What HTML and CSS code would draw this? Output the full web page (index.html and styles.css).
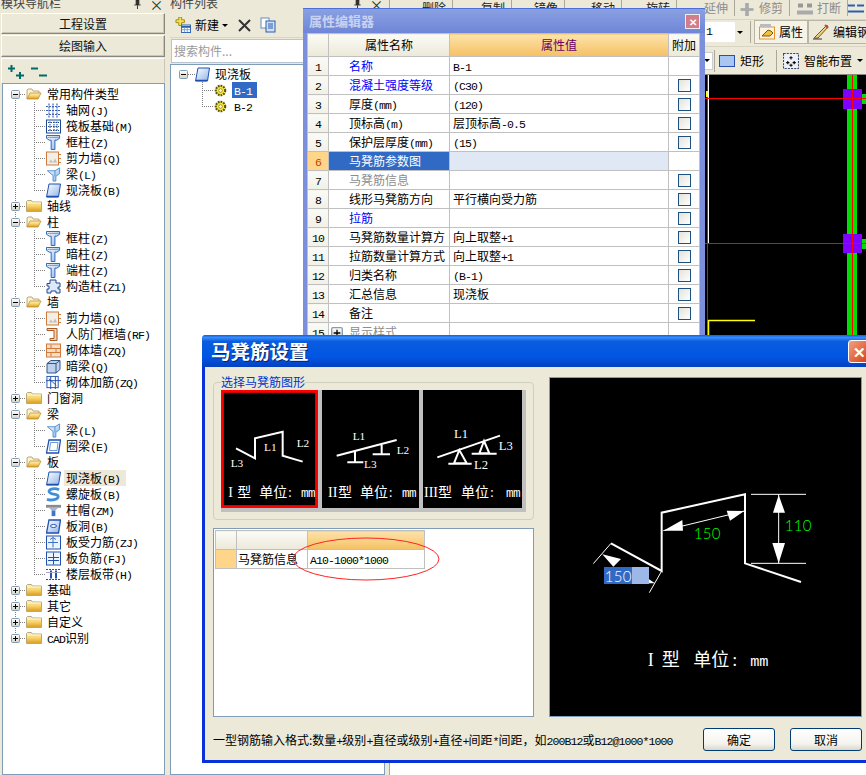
FILE: index.html
```html
<!DOCTYPE html>
<html lang="zh-CN">
<head>
<meta charset="utf-8">
<title>马凳筋设置</title>
<link rel="stylesheet" href="styles.css">
</head>
<body>
<svg class="defs" xmlns="http://www.w3.org/2000/svg">
  <defs>
    <linearGradient id="gy" x1="0" y1="0" x2="0" y2="1"><stop offset="0" stop-color="#fff3b8"/><stop offset=".5" stop-color="#f7d36a"/><stop offset="1" stop-color="#d99a1e"/></linearGradient>
    <linearGradient id="gb" x1="0" y1="0" x2="1" y2="1"><stop offset="0" stop-color="#ffffff"/><stop offset="1" stop-color="#8fb4ea"/></linearGradient>
    <linearGradient id="gw" x1="0" y1="0" x2="0" y2="1"><stop offset="0" stop-color="#ffffff"/><stop offset="1" stop-color="#d6d2c0"/></linearGradient>
    <symbol id="minus" viewBox="0 0 9 9"><rect x=".5" y=".5" width="8" height="8" rx="1" fill="url(#gw)" stroke="#7f9db9"/><path d="M2 4.500h5" stroke="#000"/></symbol>
    <symbol id="plus" viewBox="0 0 9 9"><rect x=".5" y=".5" width="8" height="8" rx="1" fill="url(#gw)" stroke="#7f9db9"/><path d="M2 4.500h5M4.500 2v5" stroke="#000"/></symbol>
    <symbol id="pinx" viewBox="0 0 9 10"><path d="M3 0h3v5H3zM1 5.500h7M4.500 6v4" fill="#333" stroke="#222"/></symbol>
    <symbol id="fo" viewBox="0 0 16 12"><path d="M1 11V2l1-1h4l1 2h6v2" fill="#fdf3cf" stroke="#b9a878"/><path d="M1 11l3-6h11l-3 6z" fill="url(#gy)" stroke="#b98f3a" stroke-width=".8"/></symbol>
    <symbol id="fc" viewBox="0 0 16 12"><path d="M.5 11.500V1.500l1-1h4l1 1.500h9v9.500z" fill="url(#gy)" stroke="#b9a878"/><path d="M1 3h14" stroke="#fff8d8"/></symbol>
    <symbol id="grid" viewBox="0 0 15 14"><path d="M0 3h15M0 7h15M0 11h15M3 0v14M7 0v14M11 0v14" stroke="#3a62b8" stroke-width="1.200" stroke-dasharray="2 1"/></symbol>
    <symbol id="raft" viewBox="0 0 15 14"><rect x=".5" y=".5" width="14" height="13" fill="#fff" stroke="#1f4a8f"/><path d="M2 3h11M2 7h11M2 11h11M4 2v10M8 2v10M11 2v10" stroke="#1f4a8f" stroke-dasharray="1.500 1"/></symbol>
    <symbol id="col" viewBox="0 0 15 16"><path d="M0 .5h14v3l-3 2H9v10H5V5.500H3l-3-2z" fill="url(#gb)" stroke="#1f5fb8"/><path d="M1 2.500h12" stroke="#7a8ca8"/></symbol>
    <symbol id="shear" viewBox="0 0 15 14"><rect x=".5" y=".5" width="12" height="13" fill="#f4efe6" stroke="#d07a3c"/><path d="M3 11l2-3 2 3 2-4 2 4z" fill="#aaa" opacity=".7"/><path d="M13 3h2M13 7h2M13 11h2" stroke="#d07a3c"/></symbol>
    <symbol id="beam" viewBox="0 0 15 16"><path d="M1 4h8l5-3v6l-4 3v5H7V9z" fill="url(#gb)" stroke="#4a90d0"/><path d="M9 4v6" stroke="#4a90d0"/></symbol>
    <symbol id="slab" viewBox="0 0 15 14"><path d="M3 .5h11.500l-2 13H.5z" fill="url(#gb)" stroke="#1f4fb0"/><path d="M1 13h11" stroke="#1f4fb0" stroke-width="1.500"/></symbol>
    <symbol id="gear" viewBox="0 0 11 11"><circle cx="5.500" cy="5.500" r="4" fill="#f5e642" stroke="#5a5200" stroke-dasharray="1.500 .8" stroke-width="1.800"/><circle cx="5.500" cy="5.500" r="1.500" fill="#fff" stroke="#8a7a00" stroke-width=".6"/></symbol>
    <symbol id="gzz" viewBox="0 0 15 14"><path d="M4 .5h6v3h4v4h-2v2h2v4H10v-2H5v2H1v-4h2v-3H1V4h3z" fill="#dfe8f6" stroke="#1f4a8f"/></symbol>
    <symbol id="rf" viewBox="0 0 15 14"><path d="M1 1h10v12H4v-2h4V3H1z" fill="#f6d7b4" stroke="#a85a20"/></symbol>
    <symbol id="brick" viewBox="0 0 15 14"><rect x=".5" y=".5" width="14" height="13" fill="#f8dcc4" stroke="#d07a3c"/><path d="M0 5h15M0 9h15M5 1v4M10 5v4M5 9v4" stroke="#d07a3c"/></symbol>
    <symbol id="dark" viewBox="0 0 15 14"><path d="M1 4l4-3h9v9l-4 3.500H1z" fill="#bcd2ee" stroke="#36557f"/><path d="M1 4h9v9.500M10 4l4-3" fill="none" stroke="#36557f"/></symbol>
    <symbol id="jj" viewBox="0 0 16 14"><rect x="1" y=".5" width="12" height="12" fill="#fff" stroke="#2050b0"/><path d="M0 5h16M5 1v13M10 1v13M3 3l8 7" stroke="#2050b0"/></symbol>
    <symbol id="ring" viewBox="0 0 15 14"><path d="M3 .5h11.500l-2 13H.5z" fill="#fff" stroke="#1f4fb0" stroke-width="1.300"/><path d="M4.500 3h7.500l-1 8H3.500z" fill="none" stroke="#6a9ad8"/></symbol>
    <symbol id="spiral" viewBox="0 0 16 14"><path d="M14 2C8-1 1 2 4 5s9 1 9 4-7 5-12 3" fill="none" stroke="#3f8fd8" stroke-width="3"/></symbol>
    <symbol id="cap" viewBox="0 0 16 14"><rect y="1" width="16" height="3" fill="#8a8a8a"/><path d="M3 4h10l-3 3H6z" fill="#a8b8cc"/><rect x="6" y="7" width="4" height="6" fill="#3f72c8"/></symbol>
    <symbol id="hole" viewBox="0 0 15 14"><path d="M3 .5h11.500l-2 13H.5z" fill="url(#gb)" stroke="#1f4fb0" stroke-width="1.300"/><ellipse cx="7.500" cy="6.500" rx="3" ry="1.500" fill="#fff" stroke="#1f4fb0"/></symbol>
    <symbol id="sl" viewBox="0 0 15 14"><rect x=".5" y=".5" width="14" height="13" fill="#eef4fc" stroke="#2050b0"/><path d="M7 2v10M2 7h10M4 4l3-2 3 2" fill="none" stroke="#3a72c8"/></symbol>
    <symbol id="neg" viewBox="0 0 15 14"><rect x=".5" y=".5" width="14" height="13" fill="#eef4fc" stroke="#2050b0"/><path d="M2 6h11M2 9h11M7.500 1v12" stroke="#2050b0"/></symbol>
    <symbol id="band" viewBox="0 0 15 14"><path d="M0 2h15M0 12h15" stroke="#2050b0" stroke-dasharray="2 1"/><path d="M5 3v8M10 3v8" stroke="#2050b0" stroke-width="2"/><path d="M0 5h15" stroke="#aac"/></symbol>
  </defs>
</svg>

<aside class="nav">
  <div class="ptitle"><span class="ptext">模块导航栏</span><svg class="pin"><use href="#pinx"/></svg><span class="pclose">×</span></div>
  <button class="navbtn">工程设置</button>
  <button class="navbtn">绘图输入</button>
  <div class="navtools">
    <svg class="tool" viewBox="0 0 16 14"><path d="M0 3.500h7M3.500 0v7M8 10.500h8M12 7v7" stroke="#006a6a" stroke-width="2"/></svg>
    <svg class="tool" viewBox="0 0 16 14"><path d="M0 3.500h7M8 10.500h8" stroke="#006a6a" stroke-width="2"/></svg>
  </div>
  <div class="tree navtree">
    <div class="nodes">
      <div class="row"><svg class="exp"><use href="#minus"/></svg><i class="dash d6"></i><svg class="folder"><use href="#fo"/></svg><span>常用构件类型</span></div>
      <div class="kids">
        <div class="leaf"><i class="dash d12"></i><svg class="ico"><use href="#grid"/></svg><span>轴网<i class="l">(J)</i></span></div>
        <div class="leaf"><i class="dash d12"></i><svg class="ico"><use href="#raft"/></svg><span>筏板基础<i class="l">(M)</i></span></div>
        <div class="leaf"><i class="dash d12"></i><svg class="ico"><use href="#col"/></svg><span>框柱<i class="l">(Z)</i></span></div>
        <div class="leaf"><i class="dash d12"></i><svg class="ico"><use href="#shear"/></svg><span>剪力墙<i class="l">(Q)</i></span></div>
        <div class="leaf"><i class="dash d12"></i><svg class="ico"><use href="#beam"/></svg><span>梁<i class="l">(L)</i></span></div>
        <div class="leaf"><i class="dash d12"></i><svg class="ico"><use href="#slab"/></svg><span>现浇板<i class="l">(B)</i></span></div>
      </div>
      <div class="row"><svg class="exp"><use href="#plus"/></svg><i class="dash d6"></i><svg class="folder"><use href="#fc"/></svg><span>轴线</span></div>
      <div class="row"><svg class="exp"><use href="#minus"/></svg><i class="dash d6"></i><svg class="folder"><use href="#fo"/></svg><span>柱</span></div>
      <div class="kids">
        <div class="leaf"><i class="dash d12"></i><svg class="ico"><use href="#col"/></svg><span>框柱<i class="l">(Z)</i></span></div>
        <div class="leaf"><i class="dash d12"></i><svg class="ico"><use href="#col"/></svg><span>暗柱<i class="l">(Z)</i></span></div>
        <div class="leaf"><i class="dash d12"></i><svg class="ico"><use href="#col"/></svg><span>端柱<i class="l">(Z)</i></span></div>
        <div class="leaf"><i class="dash d12"></i><svg class="ico"><use href="#gzz"/></svg><span>构造柱<i class="l">(Z1)</i></span></div>
      </div>
      <div class="row"><svg class="exp"><use href="#minus"/></svg><i class="dash d6"></i><svg class="folder"><use href="#fo"/></svg><span>墙</span></div>
      <div class="kids">
        <div class="leaf"><i class="dash d12"></i><svg class="ico"><use href="#shear"/></svg><span>剪力墙<i class="l">(Q)</i></span></div>
        <div class="leaf"><i class="dash d12"></i><svg class="ico"><use href="#rf"/></svg><span>人防门框墙<i class="l">(RF)</i></span></div>
        <div class="leaf"><i class="dash d12"></i><svg class="ico"><use href="#brick"/></svg><span>砌体墙<i class="l">(ZQ)</i></span></div>
        <div class="leaf"><i class="dash d12"></i><svg class="ico"><use href="#dark"/></svg><span>暗梁<i class="l">(Q)</i></span></div>
        <div class="leaf"><i class="dash d12"></i><svg class="ico"><use href="#jj"/></svg><span>砌体加筋<i class="l">(ZQ)</i></span></div>
      </div>
      <div class="row"><svg class="exp"><use href="#plus"/></svg><i class="dash d6"></i><svg class="folder"><use href="#fc"/></svg><span>门窗洞</span></div>
      <div class="row"><svg class="exp"><use href="#minus"/></svg><i class="dash d6"></i><svg class="folder"><use href="#fo"/></svg><span>梁</span></div>
      <div class="kids">
        <div class="leaf"><i class="dash d12"></i><svg class="ico"><use href="#beam"/></svg><span>梁<i class="l">(L)</i></span></div>
        <div class="leaf"><i class="dash d12"></i><svg class="ico"><use href="#ring"/></svg><span>圈梁<i class="l">(E)</i></span></div>
      </div>
      <div class="row"><svg class="exp"><use href="#minus"/></svg><i class="dash d6"></i><svg class="folder"><use href="#fo"/></svg><span>板</span></div>
      <div class="kids">
        <div class="leaf"><i class="dash d12"></i><svg class="ico"><use href="#slab"/></svg><span class="hl">现浇板<i class="l">(B)</i></span></div>
        <div class="leaf"><i class="dash d12"></i><svg class="ico"><use href="#spiral"/></svg><span>螺旋板<i class="l">(B)</i></span></div>
        <div class="leaf"><i class="dash d12"></i><svg class="ico"><use href="#cap"/></svg><span>柱帽<i class="l">(ZM)</i></span></div>
        <div class="leaf"><i class="dash d12"></i><svg class="ico"><use href="#hole"/></svg><span>板洞<i class="l">(B)</i></span></div>
        <div class="leaf"><i class="dash d12"></i><svg class="ico"><use href="#sl"/></svg><span>板受力筋<i class="l">(ZJ)</i></span></div>
        <div class="leaf"><i class="dash d12"></i><svg class="ico"><use href="#neg"/></svg><span>板负筋<i class="l">(FJ)</i></span></div>
        <div class="leaf"><i class="dash d12"></i><svg class="ico"><use href="#band"/></svg><span>楼层板带<i class="l">(H)</i></span></div>
      </div>
      <div class="row"><svg class="exp"><use href="#plus"/></svg><i class="dash d6"></i><svg class="folder"><use href="#fc"/></svg><span>基础</span></div>
      <div class="row"><svg class="exp"><use href="#plus"/></svg><i class="dash d6"></i><svg class="folder"><use href="#fc"/></svg><span>其它</span></div>
      <div class="row"><svg class="exp"><use href="#plus"/></svg><i class="dash d6"></i><svg class="folder"><use href="#fc"/></svg><span>自定义</span></div>
      <div class="row"><svg class="exp"><use href="#plus"/></svg><i class="dash d6"></i><svg class="folder"><use href="#fc"/></svg><span><i class="l">CAD</i>识别</span></div>
    </div>
  </div>
</aside>

<aside class="list">
  <div class="ptitle"><span class="ptext">构件列表</span><svg class="pin"><use href="#pinx"/></svg><span class="pclose">×</span></div>
  <div class="listtools">
    <svg class="ti16" viewBox="0 0 17 17"><path d="M4 0h3v3h3v3H7v3H4V6H1V3h3z" fill="#f5e05a" stroke="#a08a10"/><rect x="7" y="8.500" width="9.500" height="8" fill="#fff" stroke="#2a5fb0"/><path d="M7 10.500h9.500" stroke="#2a5fb0" stroke-width="2"/><path d="M10 11v5M13 11v5M7 13.500h9" stroke="#7fa0d0"/></svg>
    <span>新建</span><i class="caret"></i>
    <svg class="tix" viewBox="0 0 13 13"><path d="M1 1l11 11M12 1L1 12" stroke="#333" stroke-width="2"/></svg>
    <svg class="ti16" viewBox="0 0 16 16"><rect x="1" y="1" width="8" height="10" fill="#fff" stroke="#6a8ac0"/><rect x="6" y="4" width="9" height="11" fill="#cfe0f6" stroke="#2a5fb0"/><path d="M8 7h5M8 9h5M8 11h5" stroke="#2a5fb0"/></svg>
  </div>
  <div class="search">搜索构件...</div>
  <div class="tree listtree">
    <div class="nodes">
      <div class="row"><svg class="exp"><use href="#minus"/></svg><i class="dash d7"></i><svg class="ico"><use href="#slab"/></svg><span>现浇板</span></div>
      <div class="kids">
        <div class="leaf"><i class="dash d12"></i><svg class="gear"><use href="#gear"/></svg><span class="sel"><i class="l">B-1</i></span></div>
        <div class="leaf"><i class="dash d12"></i><svg class="gear"><use href="#gear"/></svg><span class="unsel"><i class="l">B-2</i></span></div>
      </div>
    </div>
  </div>
</aside>

<main class="main">
  <div class="tbar1">
    <div class="ti w63"><span>删除</span></div>
    <div class="ti w59"><span>复制</span></div>
    <div class="ti w53"><span>镜像</span></div>
    <div class="ti w57"><span>移动</span></div>
    <div class="ti w55"><span>旋转</span></div>
    <div class="ti w58 dim"><span>延伸</span></div>
    <div class="ti w55 dim"><svg class="tiw" viewBox="0 0 14 14"><path d="M0 7h14" stroke="#aaa" stroke-width="3"/><path d="M7 0v14" stroke="#aaa" stroke-width="4"/></svg><span>修剪</span></div>
    <div class="ti w58 dim"><svg class="tiw" viewBox="0 0 16 12"><rect x="1" y="0" width="5" height="4" fill="#999"/><rect x="10" y="0" width="5" height="4" fill="#999"/><rect y="7" width="16" height="4" fill="#aaa"/></svg><span>打断</span></div>
    <svg class="tiw" viewBox="0 0 16 12"><path d="M0 3h7M16 3H9M0 9h16" stroke="#2a5fb0" stroke-width="2"/></svg>
  </div>
  <div class="tbar2">
    <div class="combo"><span class="l">1</span><span class="cbtn"><i class="caret"></i></span></div>
    <i class="sep"></i>
    <div class="tbtn first">
      <svg class="ti16" viewBox="0 0 16 16"><rect x=".5" y="3" width="15" height="12" fill="#fff3dc" stroke="#e8932c"/><rect x="1" y="0" width="11" height="3" fill="#bbb"/><path d="M3 12l6-6 3 1 2 2-3 3z" fill="#f0c040" stroke="#7a5a10"/></svg>
      <span>属性</span>
    </div>
    <div class="tbtn">
      <svg class="ti16" viewBox="0 0 16 16"><path d="M1 14L11 4l3-3 1 2-10 11z" fill="#f0d080" stroke="#7a5a10"/><path d="M0 15h9" stroke="#333"/><path d="M12 1l3 3" stroke="#d04040" stroke-width="2"/></svg>
      <span>编辑钢筋</span>
    </div>
  </div>
  <div class="tbar3">
    <div class="minibox"><i class="caret"></i></div>
    <i class="sep sep3"></i>
    <svg class="ti16" viewBox="0 0 16 12"><rect x=".5" y=".5" width="15" height="11" fill="#a9c6f0" stroke="#2a4fb0"/></svg>
    <span class="tt">矩形</span>
    <i class="sep sep4"></i>
    <svg class="ti16" viewBox="0 0 15 15"><rect x=".5" y=".5" width="14" height="14" fill="#eef2f8" stroke="#3a4a6a" stroke-dasharray="2 1"/><path d="M7.500 3v3M6 4.500h3M3 9h3M4.500 7.500v3M9 9h3M10.500 7.500v3M7.500 10v3M6 11.500h3" stroke="#000"/></svg>
    <span class="tt">智能布置</span><i class="caret"></i>
  </div>
  <div class="cad">
    <svg class="cadsvg" viewBox="705 75 161 280">
      <path d="M708.500 75V243" stroke="#fff"/>
      <path d="M707.500 75V355" stroke="#f00"/>
      <path d="M706 91h2v6h-2z" fill="#ff0"/>
      <path d="M708 320.500h47M708.500 320V355" stroke="#ff0" stroke-width="1.500"/>
      <rect x="847" y="75" width="10" height="280" fill="#0d0"/>
      <rect x="862" y="94" width="4" height="10" fill="#0d0"/>
      <rect x="862" y="239" width="4" height="10" fill="#0d0"/>
      <path d="M862 98.500h4M862 243.500h4" stroke="#000"/>
      <rect x="843" y="89" width="19" height="20" fill="#7f00ff"/>
      <rect x="843" y="234" width="19" height="19" fill="#7f00ff"/>
      <path d="M705 98.500H866M705 243.500H866M852.500 75V355" stroke="#f00"/>
    </svg>
  </div>
</main>

<section class="prop">
  <header class="proptitle"><span>属性编辑器</span><b class="propx">✕</b></header>
  <table class="ptable">
    <colgroup><col class="c1"><col class="c2"><col class="c3"><col class="c4"></colgroup>
    <thead><tr><th></th><th>属性名称</th><th class="valh">属性值</th><th>附加</th></tr></thead>
    <tbody>
      <tr><td class="n"><i class="l">1</i></td><td class="nm blue">名称</td><td class="v"><i class="l">B-1</i></td><td></td></tr>
      <tr><td class="n"><i class="l">2</i></td><td class="nm blue">混凝土强度等级</td><td class="v"><i class="l">(C30)</i></td><td class="k"><i class="cb"></i></td></tr>
      <tr><td class="n"><i class="l">3</i></td><td class="nm">厚度<i class="l">(mm)</i></td><td class="v"><i class="l">(120)</i></td><td class="k"><i class="cb"></i></td></tr>
      <tr><td class="n"><i class="l">4</i></td><td class="nm">顶标高<i class="l">(m)</i></td><td class="v">层顶标高<i class="l">-0.5</i></td><td class="k"><i class="cb"></i></td></tr>
      <tr><td class="n"><i class="l">5</i></td><td class="nm">保护层厚度<i class="l">(mm)</i></td><td class="v"><i class="l">(15)</i></td><td class="k"><i class="cb"></i></td></tr>
      <tr class="cur"><td class="n"><i class="l">6</i></td><td class="nm">马凳筋参数图</td><td class="v"></td><td></td></tr>
      <tr><td class="n"><i class="l">7</i></td><td class="nm gray">马凳筋信息</td><td class="v"></td><td class="k"><i class="cb"></i></td></tr>
      <tr><td class="n"><i class="l">8</i></td><td class="nm">线形马凳筋方向</td><td class="v">平行横向受力筋</td><td class="k"><i class="cb"></i></td></tr>
      <tr><td class="n"><i class="l">9</i></td><td class="nm blue">拉筋</td><td class="v"></td><td class="k"><i class="cb"></i></td></tr>
      <tr><td class="n"><i class="l">10</i></td><td class="nm">马凳筋数量计算方</td><td class="v">向上取整<i class="l">+1</i></td><td class="k"><i class="cb"></i></td></tr>
      <tr><td class="n"><i class="l">11</i></td><td class="nm">拉筋数量计算方式</td><td class="v">向上取整<i class="l">+1</i></td><td class="k"><i class="cb"></i></td></tr>
      <tr><td class="n"><i class="l">12</i></td><td class="nm">归类名称</td><td class="v"><i class="l">(B-1)</i></td><td class="k"><i class="cb"></i></td></tr>
      <tr><td class="n"><i class="l">13</i></td><td class="nm">汇总信息</td><td class="v">现浇板</td><td class="k"><i class="cb"></i></td></tr>
      <tr><td class="n"><i class="l">14</i></td><td class="nm">备注</td><td class="v"></td><td class="k"><i class="cb"></i></td></tr>
      <tr><td class="n"><i class="l">15</i></td><td class="nm gray grp"><svg class="exp2"><use href="#plus"/></svg>显示样式</td><td class="v"></td><td></td></tr>
    </tbody>
  </table>
</section>

<section class="dlg">
  <header class="dlgtitle"><span>马凳筋设置</span><b class="dlgx">✕</b></header>
  <div class="dlgbody">
    <div class="dlgmain">
      <div class="left">
        <fieldset class="group">
          <legend>选择马凳筋图形</legend>
          <div class="thumbs">
            <svg class="thumb selthumb" viewBox="63 165 291 354">
              <rect x="63" y="165" width="291" height="354" fill="#000"/>
              <rect x="67" y="169" width="283" height="346" fill="none" stroke="#f00" stroke-width="9"/>
              <path d="M108 340l57 30v-60l83-20v72l60 18" fill="none" stroke="#fff" stroke-width="6"/>
              <text class="tl" x="192" y="348">L1</text><text class="tl" x="290" y="337">L2</text><text class="tl" x="92" y="396">L3</text>
              <text class="tc"><tspan x="85" y="487">I</tspan><tspan x="112" y="487">型</tspan><tspan x="178" y="487">单位</tspan><tspan x="264" y="487">:</tspan><tspan class="tm" x="303" y="487">mm</tspan></text>
            </svg>
            <svg class="thumb" viewBox="366 165 291 354">
              <rect x="366" y="165" width="291" height="354" fill="#000"/>
              <path d="M410 362l180-47M465 350v32M442 382h48M545 330v28M518 358h52" fill="none" stroke="#fff" stroke-width="6"/>
              <text class="tl" x="458" y="315">L1</text><text class="tl" x="590" y="358">L2</text><text class="tl" x="492" y="398">L3</text>
              <text class="tc"><tspan x="384" y="487">II</tspan><tspan x="414" y="487">型</tspan><tspan x="480" y="487">单位</tspan><tspan x="566" y="487">:</tspan><tspan class="tm" x="606" y="487">mm</tspan></text>
            </svg>
            <svg class="thumb t3" viewBox="669 165 297 354">
              <rect x="669" y="165" width="297" height="354" fill="#000"/>
              <path d="M712 367l188-65M745 386h70M815 356h75M778 345l-16 40h38zM852 318l-14 37h30z" fill="none" stroke="#fff" stroke-width="6"/>
              <text class="tl lg" x="762" y="310">L1</text><text class="tl lg" x="896" y="346">L3</text><text class="tl lg" x="822" y="403">L2</text>
              <text class="tc"><tspan x="672" y="487">III</tspan><tspan x="714" y="487">型</tspan><tspan x="783" y="487">单位</tspan><tspan x="870" y="487">:</tspan><tspan class="tm" x="918" y="487">mm</tspan></text>
            </svg>
          </div>
        </fieldset>
        <div class="gridbox">
          <table class="gtable">
            <colgroup><col class="g1"><col class="g2"><col class="g3"></colgroup>
            <thead><tr><th></th><th></th><th class="valh"></th></tr></thead>
            <tbody><tr><td class="gn"></td><td>马凳筋信息</td><td class="gv"><i class="l">A10-1000*1000</i></td></tr></tbody>
          </table>
          <svg class="ellipse" viewBox="0 0 148 44"><ellipse cx="74" cy="22" rx="73" ry="21" fill="none" stroke="#f22" stroke-width="1"/></svg>
        </div>
      </div>
      <div class="preview">
        <svg class="previewsvg" viewBox="15 24 933 1014">
          <path d="M768 636l-168-56V373l-250 55v175l-152-83" fill="none" stroke="#fff" stroke-width="6"/>
          <path d="M618 373h165M618 580h165M701 373v207M355 482l243-59M145 581l53-61M313 668l37-65" fill="none" stroke="#fff" stroke-width="3"/>
          <path d="M701 375l-17 53h36zM701 580l-19-61h38zM355 482l57-32 2 32zM598 423l-53-1 10 30zM172 553l56 14-23 23zM312 628l18 12h-18z" fill="#fff"/>
          <text class="gn1" x="446" y="506">150</text>
          <text class="gn1" x="719" y="482">110</text>
          <rect x="177" y="591" width="84" height="51" fill="#316ac5"/>
          <rect x="261" y="591" width="51" height="51" fill="#9db8e8"/>
          <text class="wn1" x="179" y="635">150</text>
          <text class="cap1"><tspan x="308" y="888">I</tspan><tspan x="350" y="888">型</tspan><tspan x="445" y="888">单位</tspan><tspan x="562" y="888">:</tspan><tspan class="cap2" x="616" y="888">mm</tspan></text>
        </svg>
      </div>
    </div>
    <footer class="dlgfoot">
      <span class="hint">一型钢筋输入格式:数量<i class="l">+</i>级别<i class="l">+</i>直径或级别<i class="l">+</i>直径<i class="l">+</i>间距<i class="l">*</i>间距，如<i class="l">200B12</i>或<i class="l">B12@1000*1000</i></span>
      <button class="xpbtn">确定</button>
      <button class="xpbtn">取消</button>
    </footer>
  </div>
</section>
</body>
</html>
```
FILE: styles.css
```css
* { box-sizing: border-box; }
html, body { margin: 0; padding: 0; }
body {
  width: 866px; height: 775px; overflow: hidden; position: relative;
  display: flex; background: #fff; color: #000;
  font: 12px/16px "Noto Sans CJK SC", "Liberation Sans", sans-serif;
}
i { font-style: normal; }
.l { font: 11.500px/10px "Liberation Mono", monospace; letter-spacing: -.9px; white-space: pre; }
.defs { width: 0; height: 0; flex: none; }

/* panels */
.nav { width: 170px; flex: none; height: 775px; background: #ece9d8; padding: 0 5px 0 1px; display: flex; flex-direction: column; }
.list { width: 220px; flex: none; height: 775px; background: #ece9d8; padding-right: 4px; display: flex; flex-direction: column; border-right: 1px solid #9aa8b8; }
.ptitle { height: 12px; overflow: hidden; display: flex; align-items: flex-end; padding-bottom: 3px; color: #444; line-height: 12px; flex: none; margin-bottom: 1px; }
.ptext { flex: 1; }
.pin { width: 9px; height: 9px; margin-right: 6px; flex: none; }
.pclose { width: 17px; text-align: center; font-size: 14px; line-height: 10px; color: #333; }
.navbtn {
  height: 21px; flex: none; padding: 0; margin-bottom: 1px;
  font: 12px/16px "Noto Sans CJK SC", sans-serif; color: #111;
  background: #ece9d8; border: 1px solid; border-color: #fff #8a887c #8a887c #fff;
  box-shadow: inset -1px -1px 0 #c9c6b6;
}
.navbtn + .navbtn { height: 22px; }
.navtools { height: 25px; flex: none; display: flex; gap: 7px; padding: 6px 0 0 6px; border: 1px solid; border-color: #fff #c9c6b6 transparent #fff; }
.tool { width: 16px; height: 14px; }
.tree { flex: 1; background: #fff; border: 1px solid #7f9db9; padding-top: 2px; overflow: hidden; }
.navtree { margin: 0 0 0 1px; }
.nodes {
  padding-left: 8px;
  background: repeating-linear-gradient(#808080 0 1px, transparent 1px 2px) 12px 8px / 1px 544px no-repeat;
}
.listtree { padding-top: 1px; }
.listtree .nodes { background: none; }
.row, .leaf { height: 16px; display: flex; align-items: center; white-space: nowrap; }
.exp { width: 9px; height: 9px; flex: none; }
.dash { height: 1px; flex: none; background: repeating-linear-gradient(90deg, #808080 0 1px, transparent 1px 2px); }
.d6 { width: 6px; } .d7 { width: 7px; } .d12 { width: 12px; }
.folder { width: 16px; height: 12px; flex: none; margin-right: 5px; }
.ico { width: 15px; height: 15px; flex: none; margin-right: 5px; }
.kids {
  padding-left: 23px;
  background: repeating-linear-gradient(#808080 0 1px, transparent 1px 2px) 23px 0 / 1px calc(100% - 8px) no-repeat;
}
.hl { background: #ece9d8; margin-left: -2px; padding: 0 2px; width: 62px; }
.listtools { height: 25px; flex: none; display: flex; align-items: center; padding-left: 5px; border-bottom: 1px solid #d8d5c4; }
.ti16 { width: 16px; height: 16px; flex: none; }
.listtools span { margin-left: 4px; }
.listtools .caret { margin: 0 10px 0 3px; }
.tix { width: 13px; height: 13px; margin-right: 9px; }
.caret { width: 0; height: 0; flex: none; border: 3px solid transparent; border-top: 3px solid #000; border-bottom: 0; }
.search { height: 24px; flex: none; margin: 1px 0 1px 1px; background: #fff; border: 1px solid #b8c4d0; color: #9a9a9a; padding: 3px 2px; }
.listtree { flex: 1; }
.gear { width: 13px; height: 13px; flex: none; margin-right: 5px; }
.sel { background: #316ac5; color: #fff; width: 25px; height: 16px; padding-left: 2px; }
.unsel { padding-left: 2px; }

/* main toolbars */
.main { flex: 1; min-width: 0; display: flex; flex-direction: column; overflow: hidden; }
.tbar1 { height: 20px; flex: none; background: #ece9d8; display: flex; padding-bottom: 3px; border-bottom: 1px solid #d8d5c4; }
.ti { display: flex; justify-content: flex-end; align-items: center; gap: 4px; padding-right: 6px; border-right: 1px solid #aca899; flex: none; color: #222; line-height: 14px; }
.w63 { width: 63px; } .w59 { width: 59px; } .w53 { width: 53px; } .w57 { width: 57px; } .w55 { width: 55px; } .w58 { width: 58px; }
.dim { color: #8c8c8c; }
.tiw { width: 16px; height: 13px; flex: none; margin-top: 2px; }
.tbar2 { height: 27px; flex: none; background: #ece9d8; display: flex; align-items: center; padding: 0 0 2px 315px; border-bottom: 1px solid #d8d5c4; white-space: nowrap; }
.combo { width: 40px; height: 20px; background: #fff; display: flex; justify-content: space-between; padding-left: 1px; flex: none; align-items: center; }
.cbtn { width: 10px; height: 20px; background: #ece9d8; display: flex; align-items: center; justify-content: center; }
.sep { width: 1px; height: 22px; background: #aca899; flex: none; margin: 0 3px 0 5px; }
.tbtn { height: 24px; display: flex; align-items: center; gap: 4px; padding: 0 4px; border: 1px solid #b9b6a6; flex: none; }
.tbtn.first { width: 54px; background: #f5f3e8; }
.tbar3 { height: 28px; flex: none; background: #ece9d8; display: flex; align-items: center; padding-left: 310px; border-bottom: 1px solid #8c8a7c; white-space: nowrap; }
.minibox { width: 13px; height: 18px; background: #fff; border: 1px solid #ccc; display: flex; align-items: center; justify-content: center; flex: none; }
.sep3 { margin: 0 4px 0 1px; }
.sep4 { margin: 0 6px 0 7px; }
.tt { margin: 0 5px; }
.cad { height: 280px; flex: none; background: #000; }
.cadsvg { width: 161px; height: 280px; display: block; margin-left: 315px; }

/* property window */
.prop { position: absolute; left: 303px; top: 8px; width: 402px; height: 345px; background: #7c8fdc; border-top: 1px solid #4a6fd8; padding: 0 5px 0 4px; }
.proptitle { height: 24px; display: flex; align-items: center; justify-content: space-between; color: #c8d2f0; font-weight: 700; font-size: 13px; background: linear-gradient(#8aa0e2, #6f86d8); margin: 0 -5px 0 -4px; padding: 0 5px 0 6px; }
.propx { width: 15px; height: 15px; background: #d27d8a; color: #fff; border: 1px solid #eee; font-size: 10px; line-height: 13px; text-align: center; }
.ptable { border-collapse: collapse; table-layout: fixed; width: 392px; background: #fff; font-size: 12px; }
.c1 { width: 21px; } .c2 { width: 121px; } .c3 { width: 219px; } .c4 { width: 31px; }
.ptable th { height: 23px; padding: 0; font-weight: 400; border: 1px solid #c0c0c0; background: linear-gradient(#fbfbf7, #ece9d8); overflow: hidden; line-height: 16px; }
.ptable th.valh, .gtable th.valh { background: linear-gradient(#fde3ab, #f5c063); color: #660066; }
.ptable td { height: 19px; padding: 0; border: 1px solid #c0c0c0; white-space: nowrap; overflow: hidden; line-height: 14px; }
.ptable .n { text-align: center; background: linear-gradient(#fbfbf7, #f2f0e6); }
.ptable .nm { padding-left: 20px; }
.ptable .v { padding-left: 3px; }
.ptable .k { text-align: center; }
.blue { color: #0000ff; }
.gray { color: #8c8c8c; }
.cb { display: block; width: 13px; height: 13px; margin: 0 auto; border: 1px solid #1c5180; background: linear-gradient(135deg, #e4e2d8, #fff); }
.cur .n { background: #ffd58a; color: #c04000; }
.cur .nm { background: #316ac5; color: #fff; }
.cur .v { background: #dfe8f4; }
.ptable .grp { padding-left: 2px; }
.exp2 { width: 12px; height: 12px; margin-right: 6px; vertical-align: -2px; }

/* rebar dialog */
.dlg { position: absolute; left: 202px; top: 335px; width: 672px; height: 428px; display: flex; flex-direction: column; background: #0831d9; padding: 0 3px 3px; border-radius: 4px 4px 0 0; }
.dlgtitle { height: 32px; flex: none; margin: 0 -3px; padding: 0 4px 0 9px; display: flex; align-items: center; justify-content: space-between; color: #fff; font-size: 19.500px; font-weight: 700; text-shadow: 1px 1px 0 #0a246a; border-radius: 4px 4px 0 0;
  background: linear-gradient(#0b5fe6 0, #3a8cf5 8%, #0a5ce0 20%, #0255e2 70%, #0440c0 100%); }
.dlgx { width: 22px; height: 23px; background: linear-gradient(135deg, #f0a080, #d83c14); border: 1px solid #fff; border-radius: 3px; color: #fff; font-size: 15px; line-height: 21px; text-align: center; text-shadow: none; }
.dlgbody { flex: 1; background: #ece9d8; display: flex; flex-direction: column; padding: 10px 0 0 8px; }
.dlgmain { display: flex; gap: 15px; flex: none; height: 340px; }
.left { width: 321px; flex: none; }
.group { margin: -1px 0 8px; padding: 2px 7px 7px; border: 1px solid #cfcfbd; border-radius: 4px; height: 144px; min-width: 0; }
.group legend { padding: 0; font-size: 12px; line-height: 12px; color: #0033cc; }
.thumbs { display: flex; gap: 4px; width: 305px; height: 122px; background: #c0c0c0; }
.thumb { width: 97px; height: 118px; flex: none; display: block; }
.thumb.t3 { width: 99px; }
.tl { font: 34px "Liberation Serif", serif; fill: #fff; }
.tl.lg { font-size: 38px; }
.tc { font: 42px "Liberation Serif", "Noto Sans CJK SC", serif; fill: #fff; }
.tm { font: 38px "Liberation Mono", monospace; letter-spacing: -2px; }
.gridbox { position: relative; height: 189px; background: #fff; border: 1px solid #7f9db9; padding: 1px; }
.gtable { border-collapse: collapse; table-layout: fixed; width: 209px; }
.g1 { width: 21px; } .g2 { width: 71px; } .g3 { width: 117px; }
.gtable th { height: 19px; padding: 0; border: 1px solid #c0c0c0; background: linear-gradient(#fbfbf7, #ece9d8); }
.gtable td { height: 19px; padding: 0 1px; border: 1px solid #c0c0c0; white-space: nowrap; line-height: 14px; overflow: hidden; }
.gn { background: #ffd58a; }
.gtable .gv { padding-left: 2px; }
.ellipse { position: absolute; left: 78px; top: 8px; width: 148px; height: 44px; overflow: visible; }
.preview { width: 313px; height: 340px; flex: none; background: #000; border: 1px solid #7f9db9; }
.previewsvg { width: 311px; height: 338px; display: block; }
.gn1 { font: 300 45px Lato, "Liberation Sans", sans-serif; fill: #0f0; letter-spacing: 1px; }
.wn1 { font: 300 45px Lato, "Liberation Sans", sans-serif; fill: #fff; letter-spacing: 1px; }
.cap1 { font: 54px "Liberation Serif", "Noto Sans CJK SC", serif; fill: #fff; }
.cap2 { font: 46px "Liberation Mono", monospace; letter-spacing: -1px; }
.dlgfoot { flex: 1; display: flex; align-items: flex-start; padding: 11px 0 0 0; }
.hint { flex: 1; line-height: 23px; white-space: nowrap; }
.xpbtn { width: 72px; height: 23px; padding: 0; margin-left: 15px; font: 12px/16px "Noto Sans CJK SC", sans-serif; color: #000; background: linear-gradient(#fff, #f4f3ee 70%, #dcd8c8); border: 1px solid #003c74; border-radius: 3px; flex: none; }
.xpbtn:last-child { margin-right: 9px; }
```
